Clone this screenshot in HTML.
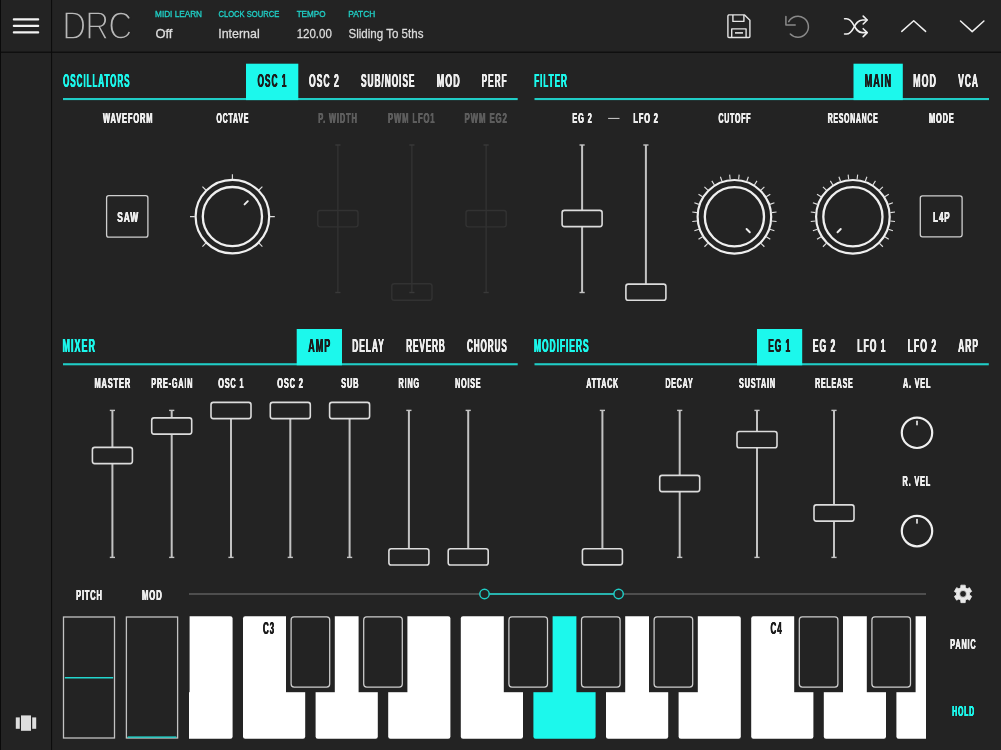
<!DOCTYPE html>
<html lang="en">
<head>
<meta charset="utf-8">
<title>DRC</title>
<style>
html,body{margin:0;padding:0;background:#232323;}
body{width:1001px;height:750px;overflow:hidden;position:relative;font-family:"Liberation Sans",sans-serif;}
#app{position:absolute;left:0;top:0;width:1001px;height:750px;background:#232323;overflow:hidden;}
#app svg{position:absolute;left:0;top:0;will-change:transform;}
text{font-family:"Liberation Sans",sans-serif;}
</style>
</head>
<body>
<div id="app">
<svg width="1001" height="750" viewBox="0 0 1001 750">
<defs><clipPath id="kbclip"><rect x="189" y="610" width="737" height="135"/></clipPath></defs>
<rect x="0" y="0" width="1" height="750" fill="#0a0a0a"/>
<rect x="51" y="0" width="1.1" height="750" fill="#0c0c0c"/>
<rect x="0" y="51.6" width="1001" height="1.2" fill="#0c0c0c"/>
<line x1="13.8" y1="19.4" x2="38.2" y2="19.4" stroke="#f2f2f2" stroke-width="2.1" stroke-linecap="round"/>
<line x1="13.8" y1="25.9" x2="38.2" y2="25.9" stroke="#f2f2f2" stroke-width="2.1" stroke-linecap="round"/>
<line x1="13.8" y1="32.4" x2="38.2" y2="32.4" stroke="#f2f2f2" stroke-width="2.1" stroke-linecap="round"/>
<g fill="#dedede"><rect x="21" y="715.4" width="10" height="15.4"/><rect x="15.8" y="717.4" width="4" height="11.4"/><rect x="32.2" y="717.4" width="4" height="11.4"/></g>
<g fill="none" stroke="#e4e4e4" stroke-width="1.4" stroke-linejoin="round"><path d="M728.6 14.9H744.6L749.9 20.2V36.4Q749.9 37.5 748.8 37.5H729Q727.9 37.5 727.9 36.4V16Q727.9 14.9 729 14.9Z"/><path d="M732.9 15V21.4H743.9V15"/><path d="M731.7 37.4V28.9H746.1V37.4"/><path d="M735 32.9H743" stroke-width="1.6"/></g>
<g fill="none" stroke="#8a8a8a" stroke-width="1.5" stroke-linecap="round" stroke-linejoin="round"><path d="M785.9 16.6V25H795.2"/><path d="M788.7 21.7A10.5 10.5 0 1 1 790.3 34.0"/></g>
<g fill="none" stroke="#f0f0f0" stroke-width="1.6" stroke-linecap="round" stroke-linejoin="round"><path d="M844.6 18.8H846.5C854.5 18.8 853.5 32.6 862.5 32.6H866.8"/><path d="M844.6 34H846.5C854.5 34 853.5 20 862.5 20H866.8"/><path d="M863.2 16.1L867.2 20L863.2 24"/><path d="M863.2 28.7L867.2 32.6L863.2 36.6"/></g>
<g fill="none" stroke="#f0f0f0" stroke-width="1.5" stroke-linecap="round" stroke-linejoin="round"><path d="M901.8 31.4L913.7 20.7L925.6 31.4"/><path d="M960.5 21L972.2 31.6L983.9 21"/></g>
<rect x="63" y="98" width="454.7" height="2.1" fill="#20cdc6"/>
<rect x="534.5" y="98" width="454.5" height="2.1" fill="#20cdc6"/>
<rect x="63" y="363.2" width="454.7" height="2.1" fill="#20cdc6"/>
<rect x="534.5" y="363.2" width="454.3" height="2.1" fill="#20cdc6"/>
<rect x="246" y="63.7" width="52.3" height="36.4" fill="#1cf8ec"/>
<rect x="853.5" y="63.7" width="49.3" height="36.4" fill="#1cf8ec"/>
<rect x="296.7" y="329" width="45.3" height="36.3" fill="#1cf8ec"/>
<rect x="757" y="329" width="45.2" height="36.3" fill="#1cf8ec"/>
<rect x="608.1" y="117.9" width="11.4" height="1" fill="#cfcfcf"/>
<g><rect x="337.4" y="145.0" width="1.0" height="147.5" fill="#393939"/><rect x="335.3" y="144.3" width="5.2" height="1.4" fill="#393939"/><rect x="335.3" y="291.8" width="5.2" height="1.4" fill="#393939"/><rect x="317.8" y="210.5" width="40.2" height="16.4" rx="2.3" fill="none" stroke="#323232" stroke-width="1.4"/></g>
<g><rect x="411.4" y="145.0" width="1.0" height="147.5" fill="#393939"/><rect x="409.3" y="144.3" width="5.2" height="1.4" fill="#393939"/><rect x="409.3" y="291.8" width="5.2" height="1.4" fill="#393939"/><rect x="391.8" y="283.8" width="40.2" height="16.4" rx="2.3" fill="none" stroke="#323232" stroke-width="1.4"/></g>
<g><rect x="485.6" y="145.0" width="1.0" height="147.5" fill="#393939"/><rect x="483.5" y="144.3" width="5.2" height="1.4" fill="#393939"/><rect x="483.5" y="291.8" width="5.2" height="1.4" fill="#393939"/><rect x="466" y="210.5" width="40.2" height="16.4" rx="2.3" fill="none" stroke="#323232" stroke-width="1.4"/></g>
<g><rect x="581.1" y="145.0" width="2" height="147.5" fill="#c2c2c2"/><rect x="579.5" y="144.3" width="5.2" height="1.4" fill="#c2c2c2"/><rect x="579.5" y="291.8" width="5.2" height="1.4" fill="#c2c2c2"/><rect x="562.1" y="210.4" width="40" height="16.2" rx="2.3" fill="#232323" stroke="#dcdcdc" stroke-width="1.6"/></g>
<g><rect x="644.9" y="145.0" width="2" height="147.5" fill="#c2c2c2"/><rect x="643.3" y="144.3" width="5.2" height="1.4" fill="#c2c2c2"/><rect x="643.3" y="291.8" width="5.2" height="1.4" fill="#c2c2c2"/><rect x="625.9" y="284.1" width="40" height="16.2" rx="2.3" fill="#232323" stroke="#dcdcdc" stroke-width="1.6"/></g>
<g><rect x="111.4" y="410.4" width="2" height="147" fill="#c2c2c2"/><rect x="109.8" y="409.7" width="5.2" height="1.4" fill="#c2c2c2"/><rect x="109.8" y="556.7" width="5.2" height="1.4" fill="#c2c2c2"/><rect x="92.4" y="447.4" width="40" height="16.2" rx="2.3" fill="#232323" stroke="#dcdcdc" stroke-width="1.6"/></g>
<g><rect x="170.7" y="410.4" width="2" height="147" fill="#c2c2c2"/><rect x="169.1" y="409.7" width="5.2" height="1.4" fill="#c2c2c2"/><rect x="169.1" y="556.7" width="5.2" height="1.4" fill="#c2c2c2"/><rect x="151.7" y="417.9" width="40" height="16.2" rx="2.3" fill="#232323" stroke="#dcdcdc" stroke-width="1.6"/></g>
<g><rect x="230" y="410.4" width="2" height="147" fill="#c2c2c2"/><rect x="228.4" y="409.7" width="5.2" height="1.4" fill="#c2c2c2"/><rect x="228.4" y="556.7" width="5.2" height="1.4" fill="#c2c2c2"/><rect x="211" y="402.4" width="40" height="16.2" rx="2.3" fill="#232323" stroke="#dcdcdc" stroke-width="1.6"/></g>
<g><rect x="289.3" y="410.4" width="2" height="147" fill="#c2c2c2"/><rect x="287.7" y="409.7" width="5.2" height="1.4" fill="#c2c2c2"/><rect x="287.7" y="556.7" width="5.2" height="1.4" fill="#c2c2c2"/><rect x="270.3" y="402.4" width="40" height="16.2" rx="2.3" fill="#232323" stroke="#dcdcdc" stroke-width="1.6"/></g>
<g><rect x="348.6" y="410.4" width="2" height="147" fill="#c2c2c2"/><rect x="347" y="409.7" width="5.2" height="1.4" fill="#c2c2c2"/><rect x="347" y="556.7" width="5.2" height="1.4" fill="#c2c2c2"/><rect x="329.6" y="402.4" width="40" height="16.2" rx="2.3" fill="#232323" stroke="#dcdcdc" stroke-width="1.6"/></g>
<g><rect x="407.9" y="410.4" width="2" height="147" fill="#c2c2c2"/><rect x="406.3" y="409.7" width="5.2" height="1.4" fill="#c2c2c2"/><rect x="406.3" y="556.7" width="5.2" height="1.4" fill="#c2c2c2"/><rect x="388.9" y="548.8" width="40" height="16.2" rx="2.3" fill="#232323" stroke="#dcdcdc" stroke-width="1.6"/></g>
<g><rect x="467.2" y="410.4" width="2" height="147" fill="#c2c2c2"/><rect x="465.6" y="409.7" width="5.2" height="1.4" fill="#c2c2c2"/><rect x="465.6" y="556.7" width="5.2" height="1.4" fill="#c2c2c2"/><rect x="448.2" y="548.8" width="40" height="16.2" rx="2.3" fill="#232323" stroke="#dcdcdc" stroke-width="1.6"/></g>
<g><rect x="601.4" y="410.4" width="2" height="147" fill="#c2c2c2"/><rect x="599.8" y="409.7" width="5.2" height="1.4" fill="#c2c2c2"/><rect x="599.8" y="556.7" width="5.2" height="1.4" fill="#c2c2c2"/><rect x="582.4" y="548.7" width="40" height="16.2" rx="2.3" fill="#232323" stroke="#dcdcdc" stroke-width="1.6"/></g>
<g><rect x="678.7" y="410.4" width="2" height="147" fill="#c2c2c2"/><rect x="677.1" y="409.7" width="5.2" height="1.4" fill="#c2c2c2"/><rect x="677.1" y="556.7" width="5.2" height="1.4" fill="#c2c2c2"/><rect x="659.7" y="475.4" width="40" height="16.2" rx="2.3" fill="#232323" stroke="#dcdcdc" stroke-width="1.6"/></g>
<g><rect x="756" y="410.4" width="2" height="147" fill="#c2c2c2"/><rect x="754.4" y="409.7" width="5.2" height="1.4" fill="#c2c2c2"/><rect x="754.4" y="556.7" width="5.2" height="1.4" fill="#c2c2c2"/><rect x="737" y="431.5" width="40" height="16.2" rx="2.3" fill="#232323" stroke="#dcdcdc" stroke-width="1.6"/></g>
<g><rect x="833" y="410.4" width="2" height="147" fill="#c2c2c2"/><rect x="831.4" y="409.7" width="5.2" height="1.4" fill="#c2c2c2"/><rect x="831.4" y="556.7" width="5.2" height="1.4" fill="#c2c2c2"/><rect x="814" y="504.9" width="40" height="16.2" rx="2.3" fill="#232323" stroke="#dcdcdc" stroke-width="1.6"/></g>
<rect x="106.6" y="195.6" width="41.3" height="41.5" rx="2.2" fill="none" stroke="#cfcfcf" stroke-width="1.3"/>
<rect x="920.3000000000001" y="195.79999999999998" width="41.8" height="41" rx="2.2" fill="none" stroke="#cfcfcf" stroke-width="1.3"/>
<g fill="none" stroke="#efefef"><circle cx="232.4" cy="216.6" r="36.8" stroke-width="2.2"/><circle cx="232.4" cy="216.6" r="29.6" stroke-width="2.3"/><path d="M205.81 243.19L202.42 246.58M194.8 216.6L190 216.6M205.81 190.01L202.42 186.62M232.4 179L232.4 174.2M258.99 190.01L262.38 186.62M270 216.6L274.8 216.6M258.99 243.19L262.38 246.58" stroke="#dddddd" stroke-width="1.15"/><path d="M244.56 204.44L247.81 201.19" stroke-width="1.9" stroke-linecap="round"/></g>
<g fill="none" stroke="#efefef"><circle cx="734.4" cy="216.8" r="36.8" stroke-width="2.2"/><circle cx="734.4" cy="216.8" r="29.6" stroke-width="2.3"/><path d="M707.81 243.39L704.42 246.78M702.56 236.8L698.5 239.36M698.91 229.22L694.38 230.8M697.04 221.01L692.27 221.55M697.04 212.59L692.27 212.05M698.91 204.38L694.38 202.8M702.56 196.8L698.5 194.24M707.81 190.21L704.42 186.82M714.4 184.96L711.84 180.9M721.98 181.31L720.4 176.78M730.19 179.44L729.65 174.67M738.61 179.44L739.15 174.67M746.82 181.31L748.4 176.78M754.4 184.96L756.96 180.9M760.99 190.21L764.38 186.82M766.24 196.8L770.3 194.24M769.89 204.38L774.42 202.8M771.76 212.59L776.53 212.05M771.76 221.01L776.53 221.55M769.89 229.22L774.42 230.8M766.24 236.8L770.3 239.36M760.99 243.39L764.38 246.78" stroke="#dddddd" stroke-width="1.15"/><path d="M746.56 228.96L749.81 232.21" stroke-width="1.9" stroke-linecap="round"/></g>
<g fill="none" stroke="#efefef"><circle cx="852.9" cy="216.8" r="36.8" stroke-width="2.2"/><circle cx="852.9" cy="216.8" r="29.6" stroke-width="2.3"/><path d="M826.31 243.39L822.92 246.78M821.06 236.8L817 239.36M817.41 229.22L812.88 230.8M815.54 221.01L810.77 221.55M815.54 212.59L810.77 212.05M817.41 204.38L812.88 202.8M821.06 196.8L817 194.24M826.31 190.21L822.92 186.82M832.9 184.96L830.34 180.9M840.48 181.31L838.9 176.78M848.69 179.44L848.15 174.67M857.11 179.44L857.65 174.67M865.32 181.31L866.9 176.78M872.9 184.96L875.46 180.9M879.49 190.21L882.88 186.82M884.74 196.8L888.8 194.24M888.39 204.38L892.92 202.8M890.26 212.59L895.03 212.05M890.26 221.01L895.03 221.55M888.39 229.22L892.92 230.8M884.74 236.8L888.8 239.36M879.49 243.39L882.88 246.78" stroke="#dddddd" stroke-width="1.15"/><path d="M840.74 228.96L837.49 232.21" stroke-width="1.9" stroke-linecap="round"/></g>
<g fill="none" stroke="#efefef"><circle cx="917" cy="432.8" r="15.2" stroke-width="2.2"/><path d="M917 421.2V424.8" stroke-width="1.6" stroke-linecap="round"/></g>
<g fill="none" stroke="#efefef"><circle cx="917" cy="531.1" r="15.2" stroke-width="2.2"/><path d="M917 519.5V523.1" stroke-width="1.6" stroke-linecap="round"/></g>
<g fill="none" stroke="#c2c2c2" stroke-width="1.3"><rect x="63.5" y="617" width="51" height="121"/><rect x="126.4" y="617" width="51.2" height="121"/></g>
<rect x="64.8" y="677" width="48.4" height="1.5" fill="#22d6ce"/>
<rect x="127.6" y="736.4" width="48.8" height="1.4" fill="#22d6ce"/>
<rect x="189" y="593.5" width="737" height="1" fill="#7a7a7a"/>
<rect x="484.5" y="593.2" width="134" height="1.6" fill="#20cdc6"/>
<circle cx="484.5" cy="594" r="4.7" fill="#232323" stroke="#20cdc6" stroke-width="1.5"/>
<circle cx="618.6" cy="594" r="4.7" fill="#232323" stroke="#20cdc6" stroke-width="1.5"/>
<path d="M965.42 587.74L965.23 585.17L960.87 585.17L960.68 587.74L958.9 588.77L956.58 587.65L954.4 591.42L956.53 592.87L956.53 594.93L954.4 596.38L956.58 600.15L958.9 599.03L960.68 600.06L960.87 602.63L965.23 602.63L965.42 600.06L967.2 599.03L969.52 600.15L971.7 596.38L969.57 594.93L969.57 592.87L971.7 591.42L969.52 587.65L967.2 588.77ZM959.65 593.9a3.4 3.4 0 1 0 6.8 0a3.4 3.4 0 1 0 -6.8 0Z" fill="#e8e8e8" fill-rule="evenodd" stroke="#e8e8e8" stroke-width="0.8" stroke-linejoin="round"/>
<g clip-path="url(#kbclip)"><rect x="170.4" y="616.2" width="62.2" height="122.5" rx="2.2" fill="#ffffff"/><rect x="243" y="616.2" width="62.2" height="122.5" rx="2.2" fill="#ffffff"/><rect x="315.6" y="616.2" width="62.2" height="122.5" rx="2.2" fill="#ffffff"/><rect x="388.2" y="616.2" width="62.2" height="122.5" rx="2.2" fill="#ffffff"/><rect x="460.8" y="616.2" width="62.2" height="122.5" rx="2.2" fill="#ffffff"/><rect x="533.4" y="616.2" width="62.2" height="122.5" rx="2.2" fill="#1cf8ec"/><rect x="606" y="616.2" width="62.2" height="122.5" rx="2.2" fill="#ffffff"/><rect x="678.6" y="616.2" width="62.2" height="122.5" rx="2.2" fill="#ffffff"/><rect x="751.2" y="616.2" width="62.2" height="122.5" rx="2.2" fill="#ffffff"/><rect x="823.8" y="616.2" width="62.2" height="122.5" rx="2.2" fill="#ffffff"/><rect x="896.4" y="616.2" width="62.2" height="122.5" rx="2.2" fill="#ffffff"/><rect x="140.8" y="615.2" width="48.8" height="77" fill="#232323"/><rect x="145.9" y="616.9" width="38.6" height="70.2" rx="3" fill="#232323" stroke="#cecece" stroke-width="1.25"/><rect x="286" y="615.2" width="48.8" height="77" fill="#232323"/><rect x="291.1" y="616.9" width="38.6" height="70.2" rx="3" fill="#232323" stroke="#cecece" stroke-width="1.25"/><rect x="358.6" y="615.2" width="48.8" height="77" fill="#232323"/><rect x="363.7" y="616.9" width="38.6" height="70.2" rx="3" fill="#232323" stroke="#cecece" stroke-width="1.25"/><rect x="503.8" y="615.2" width="48.8" height="77" fill="#232323"/><rect x="508.9" y="616.9" width="38.6" height="70.2" rx="3" fill="#232323" stroke="#cecece" stroke-width="1.25"/><rect x="576.4" y="615.2" width="48.8" height="77" fill="#232323"/><rect x="581.5" y="616.9" width="38.6" height="70.2" rx="3" fill="#232323" stroke="#cecece" stroke-width="1.25"/><rect x="649" y="615.2" width="48.8" height="77" fill="#232323"/><rect x="654.1" y="616.9" width="38.6" height="70.2" rx="3" fill="#232323" stroke="#cecece" stroke-width="1.25"/><rect x="794.2" y="615.2" width="48.8" height="77" fill="#232323"/><rect x="799.3" y="616.9" width="38.6" height="70.2" rx="3" fill="#232323" stroke="#cecece" stroke-width="1.25"/><rect x="866.8" y="615.2" width="48.8" height="77" fill="#232323"/><rect x="871.9" y="616.9" width="38.6" height="70.2" rx="3" fill="#232323" stroke="#cecece" stroke-width="1.25"/></g>
<text id="t1" transform="translate(62.24 38.8) scale(0.8521 1)" font-size="38.95" font-weight="normal" fill="#b8b8b8" stroke="#232323" stroke-width="1.6" letter-spacing="-1.17">DRC</text>
<text id="t2" transform="translate(155.04 17.3) scale(0.9123 1)" font-size="9.01" font-weight="normal" fill="#20cfc6" stroke="#20cfc6" stroke-width="0.35">MIDI LEARN</text>
<text id="t3" transform="translate(155.38 37.7) scale(1.0705 1)" font-size="12.06" font-weight="normal" fill="#dddddd" stroke="#dddddd" stroke-width="0.25">Off</text>
<text id="t4" transform="translate(218.42 17.3) scale(0.8441 1)" font-size="9.01" font-weight="normal" fill="#20cfc6" stroke="#20cfc6" stroke-width="0.35">CLOCK SOURCE</text>
<text id="t5" transform="translate(218.18 37.7) scale(1.0338 1)" font-size="12.06" font-weight="normal" fill="#dddddd" stroke="#dddddd" stroke-width="0.25">Internal</text>
<text id="t6" transform="translate(296.64 17.3) scale(0.9004 1)" font-size="9.01" font-weight="normal" fill="#20cfc6" stroke="#20cfc6" stroke-width="0.35">TEMPO</text>
<text id="t7" transform="translate(296.69 37.7) scale(0.9546 1)" font-size="12.06" font-weight="normal" fill="#dddddd" stroke="#dddddd" stroke-width="0.25">120.00</text>
<text id="t8" transform="translate(348.23 17.3) scale(0.9234 1)" font-size="9.01" font-weight="normal" fill="#20cfc6" stroke="#20cfc6" stroke-width="0.35">PATCH</text>
<text id="t9" transform="translate(348.44 37.7) scale(0.9598 1)" font-size="12.06" font-weight="normal" fill="#dddddd" stroke="#dddddd" stroke-width="0.25">Sliding To 5ths</text>
<g transform="translate(63.08 86.9) scale(0.4348 1)" fill="#1cf8ec" font-size="18.6" font-weight="bold" letter-spacing="2.14"><text id="t10">OSCILLATORS</text><use href="#t10" x="0.42"/><use href="#t10" x="-0.42"/></g>
<g transform="translate(257.47 86.9) scale(0.4497 1)" fill="#1c1c1c" font-size="18.6" font-weight="bold" letter-spacing="2.14"><text id="t11">OSC 1</text><use href="#t11" x="0.42"/><use href="#t11" x="-0.42"/></g>
<g transform="translate(308.95 86.9) scale(0.4637 1)" fill="#eeeeee" font-size="18.6" font-weight="bold" letter-spacing="2.14"><text id="t12">OSC 2</text><use href="#t12" x="0.42"/><use href="#t12" x="-0.42"/></g>
<g transform="translate(361.03 86.9) scale(0.4476 1)" fill="#eeeeee" font-size="18.6" font-weight="bold" letter-spacing="2.14"><text id="t13">SUB/NOISE</text><use href="#t13" x="0.42"/><use href="#t13" x="-0.42"/></g>
<g transform="translate(436.76 86.9) scale(0.4808 1)" fill="#eeeeee" font-size="18.6" font-weight="bold" letter-spacing="2.14"><text id="t14">MOD</text><use href="#t14" x="0.42"/><use href="#t14" x="-0.42"/></g>
<g transform="translate(481.6 86.9) scale(0.4471 1)" fill="#eeeeee" font-size="18.6" font-weight="bold" letter-spacing="2.14"><text id="t15">PERF</text><use href="#t15" x="0.42"/><use href="#t15" x="-0.42"/></g>
<g transform="translate(534.21 86.9) scale(0.4392 1)" fill="#1cf8ec" font-size="18.6" font-weight="bold" letter-spacing="2.14"><text id="t16">FILTER</text><use href="#t16" x="0.42"/><use href="#t16" x="-0.42"/></g>
<g transform="translate(864.65 86.9) scale(0.4895 1)" fill="#1c1c1c" font-size="18.6" font-weight="bold" letter-spacing="2.14"><text id="t17">MAIN</text><use href="#t17" x="0.42"/><use href="#t17" x="-0.42"/></g>
<g transform="translate(913.17 86.9) scale(0.4786 1)" fill="#eeeeee" font-size="18.6" font-weight="bold" letter-spacing="2.14"><text id="t18">MOD</text><use href="#t18" x="0.42"/><use href="#t18" x="-0.42"/></g>
<g transform="translate(958.3 86.9) scale(0.4496 1)" fill="#eeeeee" font-size="18.6" font-weight="bold" letter-spacing="2.14"><text id="t19">VCA</text><use href="#t19" x="0.42"/><use href="#t19" x="-0.42"/></g>
<g transform="translate(62.56 352) scale(0.4808 1)" fill="#1cf8ec" font-size="18.6" font-weight="bold" letter-spacing="2.14"><text id="t20">MIXER</text><use href="#t20" x="0.42"/><use href="#t20" x="-0.42"/></g>
<g transform="translate(308.22 352) scale(0.4827 1)" fill="#1c1c1c" font-size="18.6" font-weight="bold" letter-spacing="2.14"><text id="t21">AMP</text><use href="#t21" x="0.42"/><use href="#t21" x="-0.42"/></g>
<g transform="translate(352.2 352) scale(0.4515 1)" fill="#eeeeee" font-size="18.6" font-weight="bold" letter-spacing="2.14"><text id="t22">DELAY</text><use href="#t22" x="0.42"/><use href="#t22" x="-0.42"/></g>
<g transform="translate(406.21 352) scale(0.4378 1)" fill="#eeeeee" font-size="18.6" font-weight="bold" letter-spacing="2.14"><text id="t23">REVERB</text><use href="#t23" x="0.42"/><use href="#t23" x="-0.42"/></g>
<g transform="translate(466.98 352) scale(0.4361 1)" fill="#eeeeee" font-size="18.6" font-weight="bold" letter-spacing="2.14"><text id="t24">CHORUS</text><use href="#t24" x="0.42"/><use href="#t24" x="-0.42"/></g>
<g transform="translate(533.99 352) scale(0.4533 1)" fill="#1cf8ec" font-size="18.6" font-weight="bold" letter-spacing="2.14"><text id="t25">MODIFIERS</text><use href="#t25" x="0.42"/><use href="#t25" x="-0.42"/></g>
<g transform="translate(768.2 352) scale(0.4490 1)" fill="#1c1c1c" font-size="18.6" font-weight="bold" letter-spacing="2.14"><text id="t26">EG 1</text><use href="#t26" x="0.42"/><use href="#t26" x="-0.42"/></g>
<g transform="translate(812.79 352) scale(0.4593 1)" fill="#eeeeee" font-size="18.6" font-weight="bold" letter-spacing="2.14"><text id="t27">EG 2</text><use href="#t27" x="0.42"/><use href="#t27" x="-0.42"/></g>
<g transform="translate(857.29 352) scale(0.4592 1)" fill="#eeeeee" font-size="18.6" font-weight="bold" letter-spacing="2.14"><text id="t28">LFO 1</text><use href="#t28" x="0.42"/><use href="#t28" x="-0.42"/></g>
<g transform="translate(907.58 352) scale(0.4673 1)" fill="#eeeeee" font-size="18.6" font-weight="bold" letter-spacing="2.14"><text id="t29">LFO 2</text><use href="#t29" x="0.42"/><use href="#t29" x="-0.42"/></g>
<g transform="translate(958.13 352) scale(0.4568 1)" fill="#eeeeee" font-size="18.6" font-weight="bold" letter-spacing="2.14"><text id="t30">ARP</text><use href="#t30" x="0.42"/><use href="#t30" x="-0.42"/></g>
<g transform="translate(103 123) scale(0.4815 1)" fill="#eeeeee" font-size="15.55" font-weight="bold" letter-spacing="1.79"><text id="t31">WAVEFORM</text><use href="#t31" x="0.42"/><use href="#t31" x="-0.42"/></g>
<g transform="translate(216.42 123) scale(0.4484 1)" fill="#eeeeee" font-size="15.55" font-weight="bold" letter-spacing="1.79"><text id="t32">OCTAVE</text><use href="#t32" x="0.42"/><use href="#t32" x="-0.42"/></g>
<g transform="translate(318.25 123) scale(0.4810 1)" fill="#5e5e5e" font-size="15.55" font-weight="bold" letter-spacing="1.79"><text id="t33">P. WIDTH</text><use href="#t33" x="0.42"/><use href="#t33" x="-0.42"/></g>
<g transform="translate(388.04 123) scale(0.4922 1)" fill="#5e5e5e" font-size="15.55" font-weight="bold" letter-spacing="1.79"><text id="t34">PWM LFO1</text><use href="#t34" x="0.42"/><use href="#t34" x="-0.42"/></g>
<g transform="translate(464.53 123) scale(0.5043 1)" fill="#5e5e5e" font-size="15.55" font-weight="bold" letter-spacing="1.79"><text id="t35">PWM EG2</text><use href="#t35" x="0.42"/><use href="#t35" x="-0.42"/></g>
<g transform="translate(572.36 123) scale(0.4757 1)" fill="#eeeeee" font-size="15.55" font-weight="bold" letter-spacing="1.79"><text id="t36">EG 2</text><use href="#t36" x="0.42"/><use href="#t36" x="-0.42"/></g>
<g transform="translate(633.35 123) scale(0.4806 1)" fill="#eeeeee" font-size="15.55" font-weight="bold" letter-spacing="1.79"><text id="t37">LFO 2</text><use href="#t37" x="0.42"/><use href="#t37" x="-0.42"/></g>
<g transform="translate(718.52 123) scale(0.4461 1)" fill="#eeeeee" font-size="15.55" font-weight="bold" letter-spacing="1.79"><text id="t38">CUTOFF</text><use href="#t38" x="0.42"/><use href="#t38" x="-0.42"/></g>
<g transform="translate(827.69 123) scale(0.4404 1)" fill="#eeeeee" font-size="15.55" font-weight="bold" letter-spacing="1.79"><text id="t39">RESONANCE</text><use href="#t39" x="0.42"/><use href="#t39" x="-0.42"/></g>
<g transform="translate(928.95 123) scale(0.4771 1)" fill="#eeeeee" font-size="15.55" font-weight="bold" letter-spacing="1.79"><text id="t40">MODE</text><use href="#t40" x="0.42"/><use href="#t40" x="-0.42"/></g>
<g transform="translate(94.45 388) scale(0.4804 1)" fill="#eeeeee" font-size="15.55" font-weight="bold" letter-spacing="1.79"><text id="t41">MASTER</text><use href="#t41" x="0.42"/><use href="#t41" x="-0.42"/></g>
<g transform="translate(151.37 388) scale(0.4639 1)" fill="#eeeeee" font-size="15.55" font-weight="bold" letter-spacing="1.79"><text id="t42">PRE-GAIN</text><use href="#t42" x="0.42"/><use href="#t42" x="-0.42"/></g>
<g transform="translate(218.21 388) scale(0.4697 1)" fill="#eeeeee" font-size="15.55" font-weight="bold" letter-spacing="1.79"><text id="t43">OSC 1</text><use href="#t43" x="0.42"/><use href="#t43" x="-0.42"/></g>
<g transform="translate(277.2 388) scale(0.4787 1)" fill="#eeeeee" font-size="15.55" font-weight="bold" letter-spacing="1.79"><text id="t44">OSC 2</text><use href="#t44" x="0.42"/><use href="#t44" x="-0.42"/></g>
<g transform="translate(341.15 388) scale(0.4768 1)" fill="#eeeeee" font-size="15.55" font-weight="bold" letter-spacing="1.79"><text id="t45">SUB</text><use href="#t45" x="0.42"/><use href="#t45" x="-0.42"/></g>
<g transform="translate(398.57 388) scale(0.4645 1)" fill="#eeeeee" font-size="15.55" font-weight="bold" letter-spacing="1.79"><text id="t46">RING</text><use href="#t46" x="0.42"/><use href="#t46" x="-0.42"/></g>
<g transform="translate(455.17 388) scale(0.4571 1)" fill="#eeeeee" font-size="15.55" font-weight="bold" letter-spacing="1.79"><text id="t47">NOISE</text><use href="#t47" x="0.42"/><use href="#t47" x="-0.42"/></g>
<g transform="translate(586.36 388) scale(0.4515 1)" fill="#eeeeee" font-size="15.55" font-weight="bold" letter-spacing="1.79"><text id="t48">ATTACK</text><use href="#t48" x="0.42"/><use href="#t48" x="-0.42"/></g>
<g transform="translate(665.38 388) scale(0.4533 1)" fill="#eeeeee" font-size="15.55" font-weight="bold" letter-spacing="1.79"><text id="t49">DECAY</text><use href="#t49" x="0.42"/><use href="#t49" x="-0.42"/></g>
<g transform="translate(739.06 388) scale(0.4624 1)" fill="#eeeeee" font-size="15.55" font-weight="bold" letter-spacing="1.79"><text id="t50">SUSTAIN</text><use href="#t50" x="0.42"/><use href="#t50" x="-0.42"/></g>
<g transform="translate(815.18 388) scale(0.4463 1)" fill="#eeeeee" font-size="15.55" font-weight="bold" letter-spacing="1.79"><text id="t51">RELEASE</text><use href="#t51" x="0.42"/><use href="#t51" x="-0.42"/></g>
<g transform="translate(902.96 388) scale(0.4638 1)" fill="#eeeeee" font-size="15.55" font-weight="bold" letter-spacing="1.79"><text id="t52">A. VEL</text><use href="#t52" x="0.42"/><use href="#t52" x="-0.42"/></g>
<g transform="translate(902.56 486.4) scale(0.4688 1)" fill="#eeeeee" font-size="15.55" font-weight="bold" letter-spacing="1.79"><text id="t53">R. VEL</text><use href="#t53" x="0.42"/><use href="#t53" x="-0.42"/></g>
<g transform="translate(117.23 222) scale(0.5388 1)" fill="#eeeeee" font-size="15.55" font-weight="bold" letter-spacing="1.79"><text id="t54">SAW</text><use href="#t54" x="0.42"/><use href="#t54" x="-0.42"/></g>
<g transform="translate(933.12 222) scale(0.5139 1)" fill="#eeeeee" font-size="15.55" font-weight="bold" letter-spacing="1.79"><text id="t55">L4P</text><use href="#t55" x="0.42"/><use href="#t55" x="-0.42"/></g>
<g transform="translate(76.15 600) scale(0.4777 1)" fill="#eeeeee" font-size="15.55" font-weight="bold" letter-spacing="1.79"><text id="t56">PITCH</text><use href="#t56" x="0.42"/><use href="#t56" x="-0.42"/></g>
<g transform="translate(142.04 600) scale(0.4944 1)" fill="#eeeeee" font-size="15.55" font-weight="bold" letter-spacing="1.79"><text id="t57">MOD</text><use href="#t57" x="0.42"/><use href="#t57" x="-0.42"/></g>
<g transform="translate(262.98 634.3) scale(0.5032 1)" fill="#1c1c1c" font-size="15.84" font-weight="bold" letter-spacing="1.82"><text id="t58">C3</text><use href="#t58" x="0.42"/><use href="#t58" x="-0.42"/></g>
<g transform="translate(770.48 634.3) scale(0.5069 1)" fill="#1c1c1c" font-size="15.84" font-weight="bold" letter-spacing="1.82"><text id="t59">C4</text><use href="#t59" x="0.42"/><use href="#t59" x="-0.42"/></g>
<g transform="translate(950.26 649.3) scale(0.4670 1)" fill="#eeeeee" font-size="15.55" font-weight="bold" letter-spacing="1.79"><text id="t60">PANIC</text><use href="#t60" x="0.42"/><use href="#t60" x="-0.42"/></g>
<g transform="translate(952.18 715.8) scale(0.4459 1)" fill="#1cf8ec" font-size="15.55" font-weight="bold" letter-spacing="1.79"><text id="t61">HOLD</text><use href="#t61" x="0.42"/><use href="#t61" x="-0.42"/></g>
</svg>
</div>
</body>
</html>
